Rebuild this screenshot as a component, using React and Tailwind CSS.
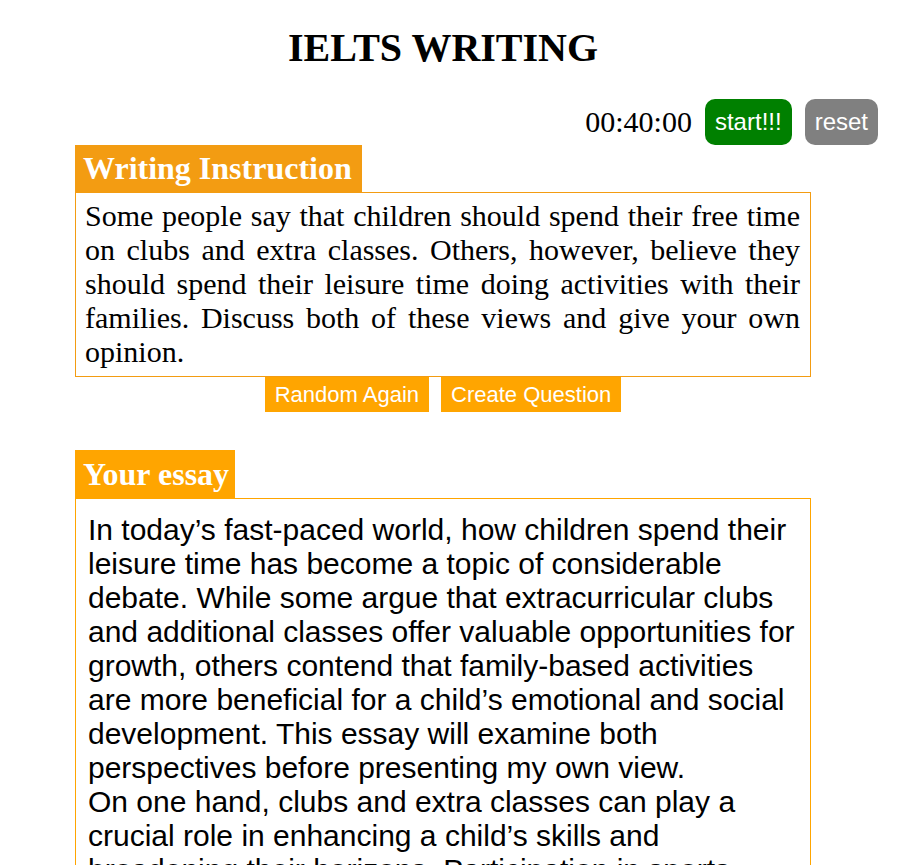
import React from 'react';

const essay = `In today’s fast-paced world, how children spend their leisure time has become a topic of considerable debate. While some argue that extracurricular clubs and additional classes offer valuable opportunities for growth, others contend that family-based activities are more beneficial for a child’s emotional and social development. This essay will examine both perspectives before presenting my own view.
On one hand, clubs and extra classes can play a crucial role in enhancing a child’s skills and broadening their horizons. Participation in sports teams, music lessons or science clubs allows young people to discover new talents and develop discipline. Moreover, these settings give children the chance to make friends with peers who share similar interests.
On the other hand, spending time with family offers benefits that cannot be found elsewhere. Shared meals, outings and simple conversations help build strong emotional bonds and teach children important values. In addition, a relaxed family environment gives children a break from the pressure of constant achievement.
In conclusion, I believe that a balance between structured activities and family time is the best approach, as both contribute to a well-rounded upbringing.`;

const instruction =
  'Some people say that children should spend their free time on clubs and extra classes. Others, however, believe they should spend their leisure time doing activities with their families. Discuss both of these views and give your own opinion.';

export default function App() {
  return (
    <div className="w-[870px] ml-2 text-black font-['Liberation_Serif','Times_New_Roman',serif]">
      <h1 className="text-center text-[40px] leading-[46px] font-bold mt-[25px] mb-[28px]">IELTS WRITING</h1>

      {/* timer */}
      <div className="flex justify-end items-center gap-[13px]">
        <span className="text-[30px] leading-[34px] ml-px">00:40:00</span>
        <button className="bg-[#008000] text-white text-[24px] leading-[28px] px-[10px] py-[9px] rounded-[10px] font-['Liberation_Sans',Arial,sans-serif]">
          start!!!
        </button>
        <button className="bg-[#808080] text-white text-[24px] leading-[28px] px-[10px] py-[9px] rounded-[10px] font-['Liberation_Sans',Arial,sans-serif]">
          reset
        </button>
      </div>

      <div className="w-[736px] mx-auto">
        {/* instruction */}
        <div className="flex">
          <h2 className="bg-[#f39c12] text-white text-[32px] leading-[37px] font-bold pl-2 pr-[10px] py-[5px]">Writing Instruction</h2>
        </div>
        <div className="border border-[#f39c12] pl-[9px] pr-[10px] pt-[6px] pb-[7px] text-[30px] leading-[34px] text-justify">
          {instruction}
        </div>
        <div className="flex justify-center gap-3 font-['Liberation_Sans',Arial,sans-serif]">
          <button className="bg-[#ffa500] text-white text-[22px] leading-[25px] px-[10px] py-[5px]">Random Again</button>
          <button className="bg-[#ffa500] text-white text-[22px] leading-[25px] px-[10px] py-[5px]">Create Question</button>
        </div>

        {/* essay */}
        <div className="mt-[38px] flex">
          <h2 className="bg-[#ffa500] text-white text-[32px] leading-[38px] font-bold pl-2 pr-[6px] py-[5px]">Your essay</h2>
        </div>
        <div className="border border-[#ffa500] pl-[12px] pr-[12px] pt-[14px] pb-4 text-[30px] leading-[34px] whitespace-pre-line font-['Liberation_Sans',Arial,sans-serif]">
          {essay}
        </div>
      </div>
    </div>
  );
}
